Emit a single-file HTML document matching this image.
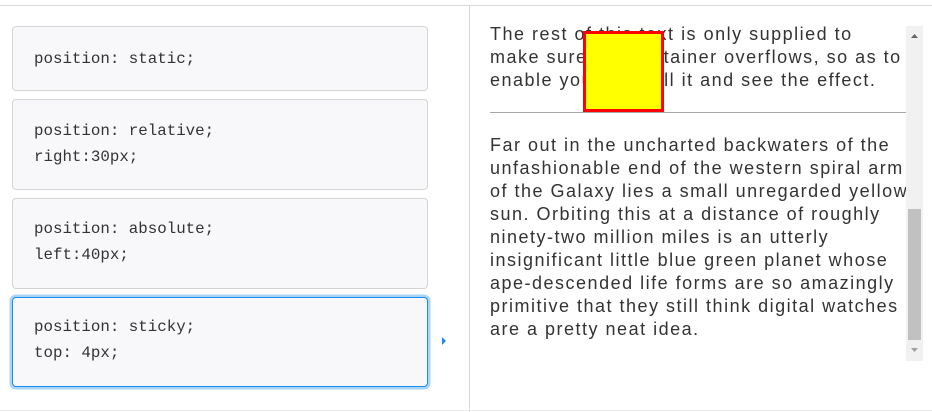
<!DOCTYPE html>
<html><head><style>
html,body{margin:0;padding:0;width:932px;height:412px;overflow:hidden;background:#fff;position:relative}
.top{position:absolute;left:0;top:5px;width:932px;height:1px;background:#d8d8d8}
.bot{position:absolute;left:0;top:410px;width:932px;height:1px;background:#eee}
.vd{position:absolute;left:469px;top:5px;width:1px;height:407px;background:#d8d8d8}
.card{position:absolute;left:12px;width:416px;background:#f8f8fa;border:1px solid #d4d4d4;border-radius:4px;font-family:"Liberation Mono",monospace;font-size:15.8px;color:#333;box-sizing:border-box;padding-left:21px;line-height:26px}
.sel{border:1.5px solid #1a8cf0;box-shadow:0 0 0 2.5px #a8d4f8}
.txt{position:absolute;left:490px;width:420px;font-family:"Liberation Sans",sans-serif;font-size:18px;letter-spacing:1.5px;line-height:23px;color:#333;white-space:nowrap}
</style></head><body>
<div class="top"></div><div class="vd"></div><div class="bot"></div>
<div class="card" style="top:26px;height:65px;padding-top:19px">position: static;</div>
<div class="card" style="top:99px;height:91px;padding-top:18px">position: relative;<br>right:30px;</div>
<div class="card" style="top:198px;height:91px;padding-top:17px">position: absolute;<br>left:40px;</div>
<div class="card sel" style="top:297px;height:90px;padding-top:16px">position: sticky;<br>top: 4px;</div>
<svg style="position:absolute;left:441px;top:336px" width="6" height="10"><path d="M1 1 L5 5 L1 9Z" fill="#1a8cf0"/></svg>
<div class="txt" style="top:23px">The rest of this text is only supplied to<br>make sure the container overflows, so as to<br>enable you to scroll it and see the effect.</div>
<div style="position:absolute;left:490px;top:112px;width:416px;height:1px;background:#aaa"></div>
<div class="txt" style="top:134px">Far out in the uncharted backwaters of the<br>unfashionable end of the western spiral arm<br>of the Galaxy lies a small unregarded yellow<br>sun. Orbiting this at a distance of roughly<br>ninety-two million miles is an utterly<br>insignificant little blue green planet whose<br>ape-descended life forms are so amazingly<br>primitive that they still think digital watches<br>are a pretty neat idea.</div>
<div style="position:absolute;left:583px;top:31px;width:75px;height:75px;background:#ff0;border:3px solid #f00"></div>
<div style="position:absolute;left:906px;top:26px;width:17px;height:335px;background:#f1f1f1"></div>
<div style="position:absolute;left:908px;top:209px;width:13px;height:131px;background:#c1c1c1"></div>
<svg style="position:absolute;left:906px;top:26px" width="17" height="335"><path d="M5 12 L12 12 L8.5 8Z" fill="#666"/><path d="M5 322 L12 322 L8.5 326Z" fill="#a0a0a0"/></svg>
</body></html>
